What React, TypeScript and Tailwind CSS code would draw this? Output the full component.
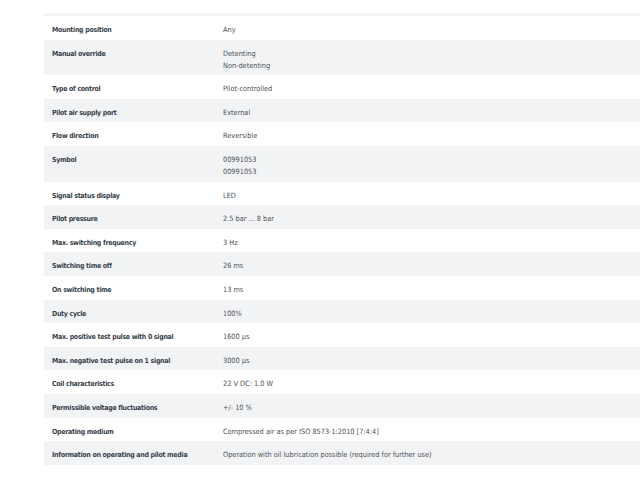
import React from "react";

const rows: [string, string[]][] = [
  ["Mounting position", ["Any"]],
  ["Manual override", ["Detenting", "Non-detenting"]],
  ["Type of control", ["Pilot-controlled"]],
  ["Pilot air supply port", ["External"]],
  ["Flow direction", ["Reversible"]],
  ["Symbol", ["00991053", "00991053"]],
  ["Signal status display", ["LED"]],
  ["Pilot pressure", ["2.5 bar ... 8 bar"]],
  ["Max. switching frequency", ["3 Hz"]],
  ["Switching time off", ["26 ms"]],
  ["On switching time", ["13 ms"]],
  ["Duty cycle", ["100%"]],
  ["Max. positive test pulse with 0 signal", ["1600 μs"]],
  ["Max. negative test pulse on 1 signal", ["3000 μs"]],
  ["Coil characteristics", ["22 V DC: 1.0 W"]],
  ["Permissible voltage fluctuations", ["+/- 10 %"]],
  ["Operating medium", ["Compressed air as per ISO 8573-1:2010 [7:4:4]"]],
  ["Information on operating and pilot media", ["Operation with oil lubrication possible (required for further use)"]],
];

export default function App() {
  return (
    <div className="w-[640px] h-[480px] bg-white overflow-hidden pt-[13px] pl-[44px]" style={{ fontFamily: "'DejaVu Sans Condensed', 'DejaVu Sans', sans-serif" }}>
      <div className="h-[3px] bg-[#f2f3f5]" />
      {rows.map(([label, vals], i) => (
        <div key={label} className={`flex ${i % 2 === 1 ? "bg-[#f2f3f5]" : "bg-white"}`}>
          <div className="w-[171px] shrink-0 pl-[8px] pt-[8px] pb-[3.6px] text-[7px] leading-[12px] font-bold tracking-[-0.3px] text-[#37414b]">
            {label}
          </div>
          <div className="pl-[8px] pt-[8px] pb-[3.6px] text-[7.3px] leading-[12px] text-[#4b5055]">
            {vals.map((v, j) => (
              <div key={j}>{v}</div>
            ))}
          </div>
        </div>
      ))}
    </div>
  );
}
